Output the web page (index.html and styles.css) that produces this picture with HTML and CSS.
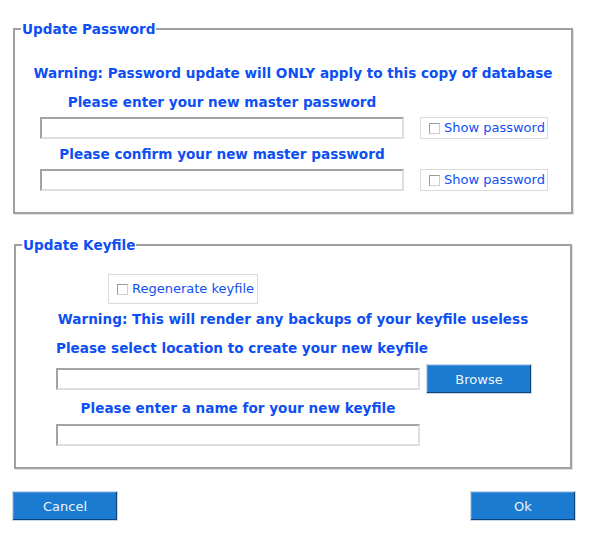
FILE: index.html
```html
<!DOCTYPE html>
<html>
<head>
<meta charset="utf-8">
<link rel="stylesheet" href="styles.css">
</head>
<body>
<div class="dialog">
  <fieldset class="frame frame-pw">
    <legend class="frame-title">Update Password</legend>
    <div class="frame-body pw-body">
      <div class="warn warn-pw">Warning: Password update will ONLY apply to this copy of database</div>
      <div class="pw-grid">
        <div class="label lbl-1">Please enter your new master password</div>
        <div class="entry"></div>
        <label class="check-box"><span class="check"></span><span class="check-text">Show password</span></label>
        <div class="label lbl-2">Please confirm your new master password</div>
        <div class="entry"></div>
        <label class="check-box"><span class="check"></span><span class="check-text">Show password</span></label>
      </div>
    </div>
  </fieldset>

  <fieldset class="frame frame-key">
    <legend class="frame-title">Update Keyfile</legend>
    <div class="frame-body key-body">
      <label class="check-box regen"><span class="check"></span><span class="check-text">Regenerate keyfile</span></label>
      <div class="warn warn-key">Warning: This will render any backups of your keyfile useless</div>
      <div class="key-grid">
        <div class="label lbl-3">Please select location to create your new keyfile</div>
        <div class="entry loc-entry"></div>
        <button class="btn browse">Browse</button>
        <div class="label lbl-4">Please enter a name for your new keyfile</div>
        <div class="entry name-entry"></div>
      </div>
    </div>
  </fieldset>

  <div class="actions">
    <button class="btn">Cancel</button>
    <button class="btn">Ok</button>
  </div>
</div>
</body>
</html>
```

FILE: styles.css
```css
html, body {
  margin: 0;
  padding: 0;
  background: #ffffff;
}

body {
  font-family: "DejaVu Sans", "Liberation Sans", sans-serif;
  font-size: 13px;
  color: #0d4ff3;
  width: 598px;
  height: 539px;
  overflow: hidden;
}

.dialog {
  padding-top: 21px;
  display: flex;
  flex-direction: column;
}

.frame {
  margin: 0;
  padding: 0;
  min-width: 0;
  border: 2px solid #a0a0a0;
  box-shadow: 1px 1px 0 #e2e2e2;
  box-sizing: border-box;
}

.frame-pw {
  margin-left: 13px;
  width: 560px;
}

.frame-key {
  margin-left: 14px;
  margin-top: 23px;
  width: 558px;
}

.frame-title {
  font-weight: bold;
  font-size: 13.6px;
  line-height: 16px;
  padding: 0 1px;
  margin-left: 6px;
}

.frame-body {
  display: flex;
  flex-direction: column;
  padding-bottom: 21px;
}

.warn, .label {
  font-weight: bold;
  font-size: 13.6px;
  line-height: 16px;
  text-align: center;
  white-space: nowrap;
}

.warn-pw {
  margin-top: 28px;
}

.pw-grid {
  display: grid;
  grid-template-columns: 364px 128px;
  column-gap: 16px;
  padding-left: 25px;
  margin-top: 13px;
}

.lbl-2 {
  margin-top: 7px;
}

.pw-grid .entry,
.pw-grid .check-box {
  margin-top: 7px;
}

.label {
  grid-column: 1;
}

.entry {
  grid-column: 1;
  height: 22px;
  box-sizing: border-box;
  border: 2px solid;
  border-color: #a3a3a3 #dedede #dedede #a3a3a3;
  background: #ffffff;
}

.check-box {
  display: flex;
  align-items: center;
  height: 22px;
  box-sizing: border-box;
  border: 1px solid #dadada;
  padding-left: 8px;
  gap: 4px;
  white-space: nowrap;
}

.check {
  width: 9px;
  height: 9px;
  border: 1px solid;
  border-color: #9a9a9a #cfcfcf #cfcfcf #9a9a9a;
  background: #ffffff;
  flex: none;
}

.check-text {
  line-height: 16px;
}

.regen {
  align-self: flex-start;
  margin-left: 92px;
  margin-top: 21px;
  height: 30px;
  width: 150px;
}

.warn-key {
  margin-top: 7px;
}

.key-grid {
  display: grid;
  grid-template-columns: 364px 108px;
  column-gap: 6px;
  padding-left: 40px;
  margin-top: 13px;
}

.lbl-3 {
  grid-row: 1;
  margin-bottom: 8px;
}

.loc-entry {
  grid-row: 2;
  align-self: center;
}

.browse {
  grid-column: 2;
  grid-row: 2;
}

.lbl-4 {
  grid-row: 3;
  margin-top: 6px;
  margin-bottom: 8px;
}

.name-entry {
  grid-row: 4;
}

.btn {
  width: 106px;
  height: 30px;
  box-sizing: border-box;
  background: #1a7bd0;
  color: #eef4fb;
  font-family: "DejaVu Sans", "Liberation Sans", sans-serif;
  font-size: 13px;
  border: 1px solid #c9d9ea;
  box-shadow: inset -1px -1px 0 #0d437a, inset 1px 1px 0 #4a95dc;
  padding: 0;
  margin: 0;
}

.actions {
  display: flex;
  justify-content: space-between;
  padding: 0 22px 0 12px;
  margin-top: 22px;
}
```
